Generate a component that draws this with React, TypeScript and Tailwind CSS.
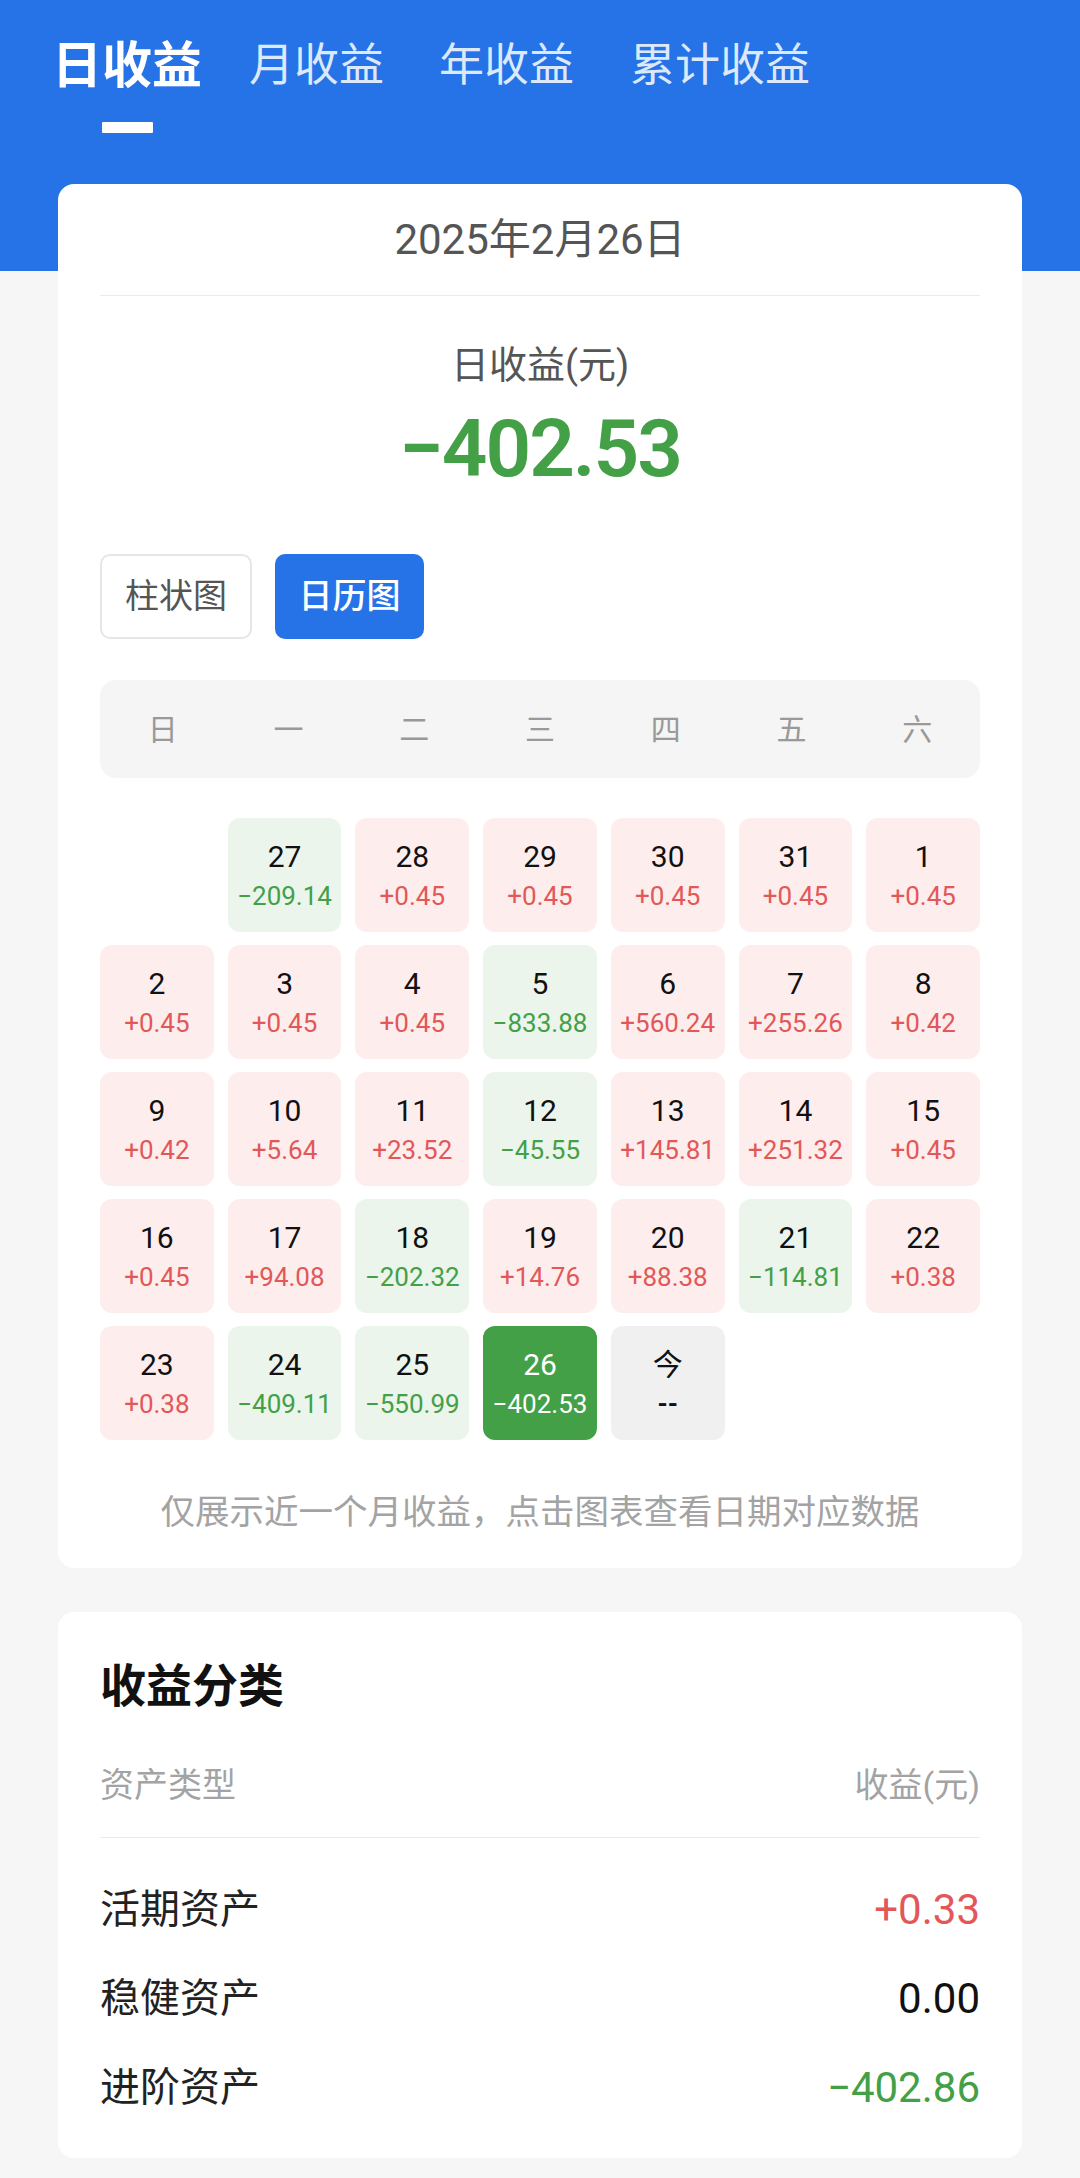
import React from "react";

type Cell = { day: string; value: string; kind: "up" | "down" | "selected" | "today" | "empty" };

const cells: Cell[] = [
  { day: "", value: "", kind: "empty" },
  { day: "27", value: "−209.14", kind: "down" },
  { day: "28", value: "+0.45", kind: "up" },
  { day: "29", value: "+0.45", kind: "up" },
  { day: "30", value: "+0.45", kind: "up" },
  { day: "31", value: "+0.45", kind: "up" },
  { day: "1", value: "+0.45", kind: "up" },
  { day: "2", value: "+0.45", kind: "up" },
  { day: "3", value: "+0.45", kind: "up" },
  { day: "4", value: "+0.45", kind: "up" },
  { day: "5", value: "−833.88", kind: "down" },
  { day: "6", value: "+560.24", kind: "up" },
  { day: "7", value: "+255.26", kind: "up" },
  { day: "8", value: "+0.42", kind: "up" },
  { day: "9", value: "+0.42", kind: "up" },
  { day: "10", value: "+5.64", kind: "up" },
  { day: "11", value: "+23.52", kind: "up" },
  { day: "12", value: "−45.55", kind: "down" },
  { day: "13", value: "+145.81", kind: "up" },
  { day: "14", value: "+251.32", kind: "up" },
  { day: "15", value: "+0.45", kind: "up" },
  { day: "16", value: "+0.45", kind: "up" },
  { day: "17", value: "+94.08", kind: "up" },
  { day: "18", value: "−202.32", kind: "down" },
  { day: "19", value: "+14.76", kind: "up" },
  { day: "20", value: "+88.38", kind: "up" },
  { day: "21", value: "−114.81", kind: "down" },
  { day: "22", value: "+0.38", kind: "up" },
  { day: "23", value: "+0.38", kind: "up" },
  { day: "24", value: "−409.11", kind: "down" },
  { day: "25", value: "−550.99", kind: "down" },
  { day: "26", value: "−402.53", kind: "selected" },
  { day: "今", value: "--", kind: "today" },
];

const weekdays = ["日", "一", "二", "三", "四", "五", "六"];

const cellStyles = {
  up: { box: "bg-[#fdeded]", day: "text-[#111]", value: "text-[#e25858]" },
  down: { box: "bg-[#ebf5ec]", day: "text-[#111]", value: "text-[#43a047]" },
  selected: { box: "bg-[#43a047]", day: "text-white", value: "text-white" },
  today: { box: "bg-[#f0f0f0]", day: "text-[#111]", value: "text-[#111]" },
  empty: { box: "", day: "", value: "" },
};

function DayCell({ cell }: { cell: Cell }) {
  if (cell.kind === "empty") return <div className="h-[114px]" />;
  const s = cellStyles[cell.kind];
  return (
    <div className={`h-[114px] rounded-[12px] flex flex-col items-center justify-center gap-[6px] ${s.box}`}>
      <span className={`text-[30px] leading-[36px] ${s.day}`}>{cell.day}</span>
      <span className={`text-[26px] leading-[30px] ${s.value} ${cell.kind === "today" ? "font-bold" : ""}`}>
        {cell.value}
      </span>
    </div>
  );
}

export default function App() {
  return (
    <div className="min-h-[2178px] bg-[#f6f6f6] font-['Roboto','Noto_Sans_CJK_SC',sans-serif]">
      <div className="h-[271px] bg-[#2573e6] pl-[52px] pt-[38px]">
        <div className="flex items-start">
          <div className="flex flex-col items-center">
            <span className="text-[50px] leading-[56px] font-bold text-white">日收益</span>
            <span className="mt-[28px] w-[51px] h-[11px] bg-white rounded-[1px]" />
          </div>
          <span className="ml-[47px] text-[45px] leading-[56px] text-[#dce8fb]">月收益</span>
          <span className="ml-[55px] text-[45px] leading-[56px] text-[#dce8fb]">年收益</span>
          <span className="ml-[56px] text-[45px] leading-[56px] text-[#dce8fb]">累计收益</span>
        </div>
      </div>

      <div className="-mt-[87px] px-[58px] pb-[21px]">
        <div className="bg-white rounded-[16px] px-[42px] pb-[36px]">
          <div className="h-[112px] flex items-center justify-center border-b border-[#ebebeb] text-[42px] text-[#555]">
            2025年2月26日
          </div>
          <div className="mt-[47px] text-center text-[38px] leading-[44px] text-[#555]">日收益(元)</div>
          <div className="mt-[22px] text-center text-[80px] leading-[80px] font-semibold tracking-[-2px] text-[#43a047]">
            −402.53
          </div>
          <div className="mt-[65px] flex gap-[23px]">
            <button className="w-[152px] h-[85px] rounded-[10px] border-2 border-[#e6e6e6] bg-white text-[34px] text-[#555]">
              柱状图
            </button>
            <button className="w-[149px] h-[85px] rounded-[10px] bg-[#2573e6] text-[34px] font-medium text-white">
              日历图
            </button>
          </div>
          <div className="mt-[41px] h-[98px] rounded-[16px] bg-[#f5f5f5] grid grid-cols-7 items-center">
            {weekdays.map((w) => (
              <span key={w} className="text-center text-[30px] text-[#999]">
                {w}
              </span>
            ))}
          </div>
          <div className="mt-[40px] grid grid-cols-7 gap-x-[14px] gap-y-[13px]">
            {cells.map((c, i) => (
              <DayCell key={i} cell={c} />
            ))}
          </div>
          <p className="mt-[52px] text-center text-[34.5px] leading-[40px] text-[#a3a3a3]">
            仅展示近一个月收益，点击图表查看日期对应数据
          </p>
        </div>

        <div className="mt-[44px] bg-white rounded-[16px] px-[42px] pt-[48px] pb-[26px]">
          <h2 className="text-[46px] leading-[52px] font-bold text-[#111]">收益分类</h2>
          <div className="mt-[53px] pb-[32px] border-b border-[#ebebeb] flex justify-between text-[34px] leading-[40px] text-[#a3a3a3]">
            <span>资产类型</span>
            <span>收益(元)</span>
          </div>
          <div className="pt-[27px]">
            <div className="h-[89px] flex items-center justify-between">
              <span className="text-[40px] text-[#222]">活期资产</span>
              <span className="text-[42px] text-[#e25858]">+0.33</span>
            </div>
            <div className="h-[89px] flex items-center justify-between">
              <span className="text-[40px] text-[#222]">稳健资产</span>
              <span className="text-[42px] text-[#111]">0.00</span>
            </div>
            <div className="h-[89px] flex items-center justify-between">
              <span className="text-[40px] text-[#222]">进阶资产</span>
              <span className="text-[42px] text-[#43a047]">−402.86</span>
            </div>
          </div>
        </div>
      </div>
    </div>
  );
}
